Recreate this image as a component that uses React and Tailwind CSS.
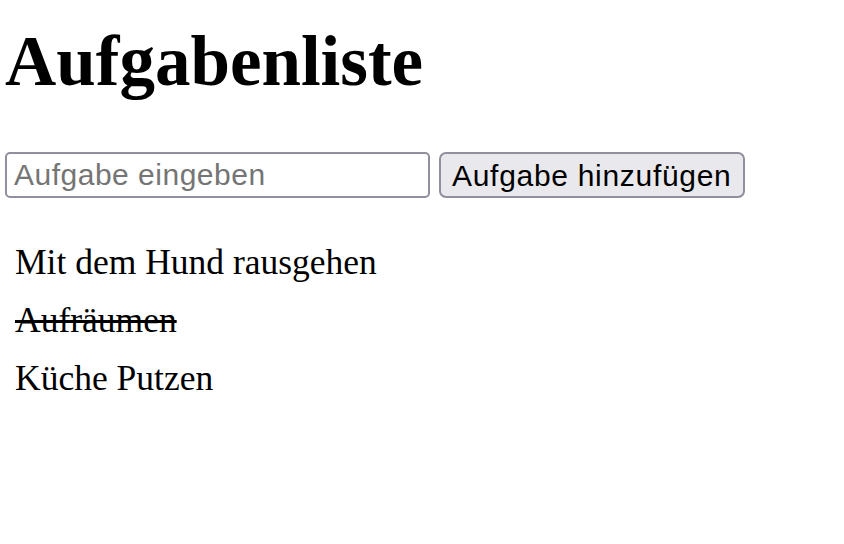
import { useState } from "react";

const Aufgabenliste = () => {
  const [eingabe, setEingabe] = useState("");
  const [aufgaben, setAufgaben] = useState([
    { text: "Mit dem Hund rausgehen", erledigt: false },
    { text: "Aufräumen", erledigt: true },
    { text: "Küche Putzen", erledigt: false },
  ]);

  const handleSubmit = (e) => {
    e.preventDefault();
    if (eingabe.trim() === "") return;
    setAufgaben([...aufgaben, { text: eingabe, erledigt: false }]);
    setEingabe("");
  };

  const toggle = (index) => {
    setAufgaben(
      aufgaben.map((a, i) => (i === index ? { ...a, erledigt: !a.erledigt } : a))
    );
  };

  return (
    <div className="min-h-[544px] bg-white px-[5px] text-black font-['Liberation_Serif','Times_New_Roman',serif]">
      <h1 className="pt-[25px] text-[71px] font-bold leading-[72px]">
        Aufgabenliste
      </h1>

      <form className="mt-[55px] flex gap-[9px]" onSubmit={handleSubmit}>
        <input
          type="text"
          value={eingabe}
          onChange={(e) => setEingabe(e.target.value)}
          placeholder="Aufgabe eingeben"
          className="h-[46px] w-[425px] rounded-[5px] border-2 border-[#8f8f9d] bg-white px-[7px] text-[30px] tracking-[0.5px] font-['Liberation_Sans',Arial,sans-serif] outline-none placeholder:text-[#757575]"
        />
        <button
          type="submit"
          className="h-[46px] rounded-[7px] border-2 border-[#8f8f9d] bg-[#e9e9ed] px-[11px] pt-[2px] text-[30px] leading-none tracking-[0.7px] font-['Liberation_Sans',Arial,sans-serif]"
        >
          Aufgabe hinzufügen
        </button>
      </form>

      <ul className="mt-[35px] pl-[10px] text-[35.5px] leading-[58px]">
        {aufgaben.map((a, i) => (
          <li
            key={i}
            onClick={() => toggle(i)}
            className={`cursor-pointer ${a.erledigt ? "line-through" : ""}`}
          >
            {a.text}
          </li>
        ))}
      </ul>
    </div>
  );
};

export default Aufgabenliste;
